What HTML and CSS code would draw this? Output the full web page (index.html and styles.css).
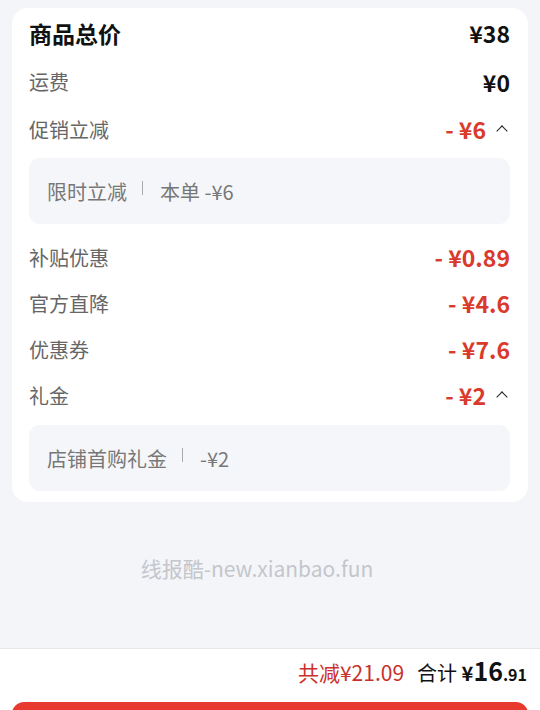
FILE: index.html
```html
<!DOCTYPE html>
<html lang="zh-CN">

<head>
    <meta charset="UTF-8">
    <meta name="viewport" content="width=device-width, initial-scale=1.0">
    <title>订单金额明细</title>
    <link rel="stylesheet" href="styles.css">
</head>

<body>
    <div class="page">
        <div class="card">
            <div class="row row-total">
                <span class="label">商品总价</span>
                <span class="value">¥38</span>
            </div>
            <div class="row row-freight">
                <span class="label">运费</span>
                <span class="value">¥0</span>
            </div>
            <div class="row">
                <span class="label">促销立减</span>
                <span class="value minus">- ¥6<i class="chevron"></i></span>
            </div>
            <div class="detail detail-first">
                <span>限时立减</span><i class="sep"></i><span>本单 -¥6</span>
            </div>
            <div class="row row-after">
                <span class="label">补贴优惠</span>
                <span class="value minus">- ¥0.89</span>
            </div>
            <div class="row">
                <span class="label">官方直降</span>
                <span class="value minus">- ¥4.6</span>
            </div>
            <div class="row">
                <span class="label">优惠券</span>
                <span class="value minus">- ¥7.6</span>
            </div>
            <div class="row">
                <span class="label">礼金</span>
                <span class="value minus">- ¥2<i class="chevron"></i></span>
            </div>
            <div class="detail detail-last">
                <span>店铺首购礼金</span><i class="sep"></i><span>-¥2</span>
            </div>
        </div>

        <div class="watermark">线报酷-new.xianbao.fun</div>

        <div class="footer">
            <div class="summary">
                <span class="saved">共减¥21.09</span>
                <span class="sum">合计 <b class="yen">¥</b><b class="big">16</b><b class="cents">.91</b></span>
            </div>
            <div class="pay-btn"></div>
        </div>
    </div>
</body>

</html>
```

FILE: styles.css
```css
body {
    margin: 0;
    font-family: 'Noto Sans CJK SC', 'Noto Sans', sans-serif;
    background-color: #f4f5f8;
}

.page {
    height: 710px;
    overflow: hidden;
    padding-top: 8px;
    box-sizing: border-box;
}

.card {
    margin: 0 12px;
    padding: 0 18px 11px 17px;
    background-color: #ffffff;
    border-radius: 16px;
}

.row {
    display: flex;
    justify-content: space-between;
    align-items: center;
    height: 46px;
}

.row-total,
.row-freight {
    height: 49px;
}

.row-after {
    margin-top: 10px;
}

.label {
    font-size: 20px;
    color: #666666;
}

.row-total .label {
    font-size: 23px;
    font-weight: bold;
    color: #111111;
}

.value {
    display: flex;
    align-items: center;
    font-size: 23px;
    font-weight: bold;
    color: #111111;
}

.value.minus {
    color: #d93a2c;
    white-space: pre;
}

.chevron {
    width: 7px;
    height: 7px;
    margin: 4px 4px 0 12px;
    border-left: 1.5px solid #222222;
    border-top: 1.5px solid #222222;
    transform: rotate(45deg);
}

.detail {
    display: flex;
    align-items: center;
    height: 66px;
    padding: 0 18px;
    background-color: #f5f6f9;
    border-radius: 11px;
    font-size: 20px;
    color: #777777;
}

.detail-first {
    margin-top: 6px;
}

.detail-last {
    margin-top: 7px;
}

.sep {
    width: 1px;
    height: 14px;
    margin: 0 17px 6px 15px;
    background-color: #aaaaaa;
}

.watermark {
    height: 146px;
    padding: 52px 26px 0 0;
    box-sizing: border-box;
    text-align: center;
    font-size: 21px;
    line-height: 28px;
    color: #c4c6cc;
}

.footer {
    background-color: #ffffff;
    border-top: 1px solid #e6e6e6;
}

.summary {
    display: flex;
    justify-content: flex-end;
    align-items: baseline;
    padding: 6px 13px 0 0;
    height: 30px;
    line-height: 30px;
}

.saved {
    font-size: 21px;
    color: #c9302c;
    margin-right: 13px;
}

.sum {
    font-size: 20px;
    color: #111111;
}

.sum b {
    font-weight: bold;
}

.big {
    font-size: 25px;
}

.cents {
    font-size: 16px;
}

.pay-btn {
    height: 60px;
    margin: 17px 12px 0;
    background-color: #e8392f;
    border-radius: 12px;
}
```
